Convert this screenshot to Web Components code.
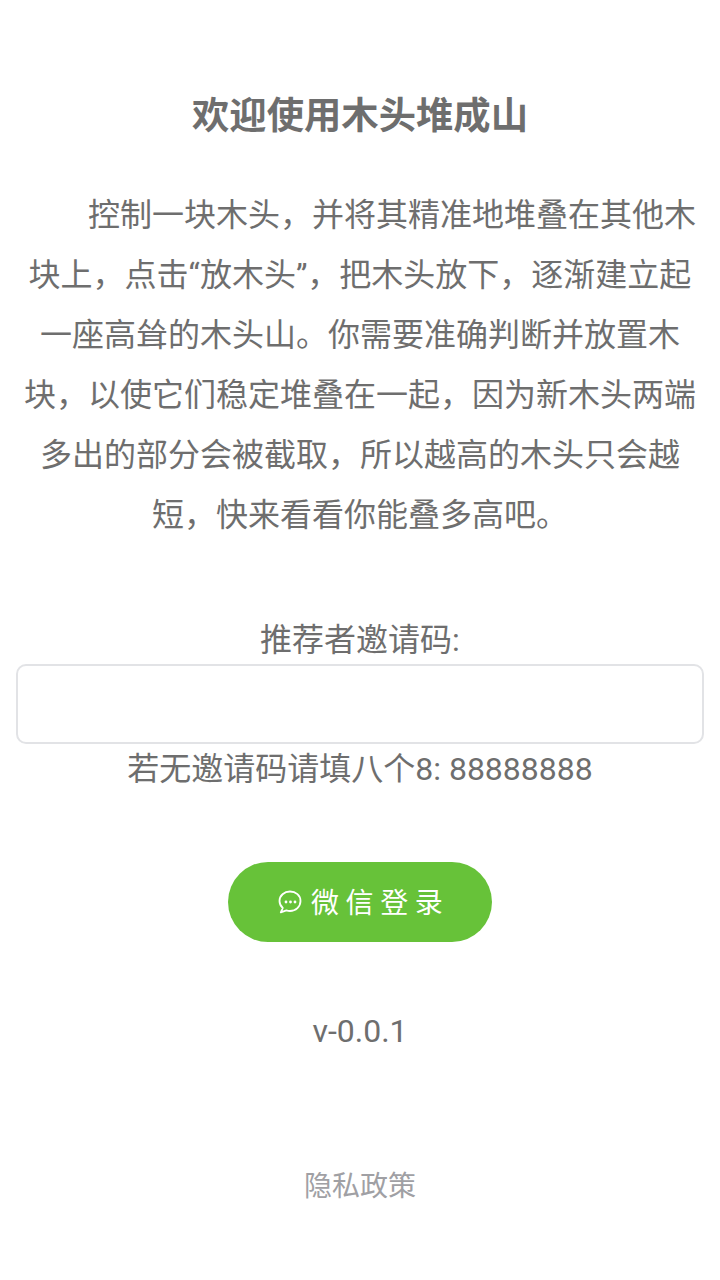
<!DOCTYPE html>
<html lang="zh-CN">
<head>
<meta charset="utf-8">
<title>木头堆成山</title>
<style>
  html, body { margin: 0; padding: 0; background: #fff; }
  body { font-family: Roboto, "Noto Sans CJK SC", sans-serif; color: #6e6e6e; }
</style>
</head>
<body>
<login-page>
  <intro-block title-text="欢迎使用木头堆成山">控制一块木头，并将其精准地堆叠在其他木块上，点击“放木头”，把木头放下，逐渐建立起一座高耸的木头山。你需要准确判断并放置木块，以使它们稳定堆叠在一起，因为新木头两端多出的部分会被截取，所以越高的木头只会越短，快来看看你能叠多高吧。</intro-block>
  <invite-field label="推荐者邀请码:" hint="若无邀请码请填八个8: 88888888"></invite-field>
  <wechat-button>微信登录</wechat-button>
  <page-footer version="v-0.0.1" link="隐私政策"></page-footer>
</login-page>
<script>
class loginPage extends HTMLElement {
    constructor() {
        super();
        this.attachShadow({mode: "open"});
        this.shadowRoot.innerHTML = `
          <style>
            :host {
                display: flex;
                flex-direction: column;
                min-height: 1280px;
                box-sizing: border-box;
                padding: 0 16px;
                font-family: Roboto, "Noto Sans CJK SC", sans-serif;
                color: #6e6e6e;
            }
          </style>
          <slot></slot>
        `;
    }
}
class introBlock extends HTMLElement {
    constructor() {
        super();
        this.attachShadow({mode: "open"});
        this.shadowRoot.innerHTML = `
          <style>
            :host {
                display: block;
                padding-top: 92px;
                text-align: center;
            }
            h1 {
                margin: 0 0 45px;
                font-size: 37.33px;
                line-height: 48px;
                font-weight: 700;
            }
            p {
                margin: 0;
                font-size: 32px;
                line-height: 60px;
                text-indent: 2em;
            }
          </style>
          <h1>${this.getAttribute("title-text")}</h1>
          <p><slot></slot></p>
        `;
    }
}
class inviteField extends HTMLElement {
    constructor() {
        super();
        this.attachShadow({mode: "open"});
        this.shadowRoot.innerHTML = `
          <style>
            :host {
                display: block;
                margin-top: 71px;
                text-align: center;
                font-size: 32px;
            }
            label { display: block; }
            input {
                display: block;
                box-sizing: border-box;
                width: 100%;
                height: 80px;
                margin: 0;
                border: 2px solid #e2e3e6;
                border-radius: 10px;
                background: #fff;
                outline: none;
            }
            .label-line { line-height: 48px; }
            .hint { line-height: 50px; }
          </style>
          <label class="label-line" for="code">${this.getAttribute("label")}</label>
          <input id="code" type="text">
          <div class="hint">${this.getAttribute("hint")}</div>
        `;
    }
}
class wechatButton extends HTMLElement {
    constructor() {
        super();
        this.attachShadow({mode: "open"});
        this.shadowRoot.innerHTML = `
          <style>
            :host {
                display: flex;
                justify-content: center;
                margin-top: 68px;
            }
            button {
                display: flex;
                align-items: center;
                justify-content: flex-start;
                gap: 9px;
                box-sizing: border-box;
                width: 264px;
                height: 80px;
                padding: 0 0 0 50px;
                border: 0;
                border-radius: 40px;
                background: #67c239;
                color: #fff;
                font-family: inherit;
                font-size: 28px;
                letter-spacing: 6.6px;
            }
            svg { width: 24px; height: 24px; display: block; }
            span { margin-top: -2px; }
          </style>
          <button>
            <svg viewBox="0 0 24 24" fill="none" stroke="#fff" stroke-width="1.8" stroke-linejoin="round" stroke-linecap="round">
              <path d="M12 1.500C6.200 1.500 1.500 5.600 1.500 11c0 2.800 1.300 5.200 3.300 7L2.800 22.400l5.600-2c1.100.4 2.300.6 3.600.6 5.800 0 10.500-4.400 10.500-10S17.800 1.500 12 1.500z"/>
              <circle cx="8" cy="12" r="1.400" fill="#fff" stroke="none"/>
              <circle cx="12.500" cy="12" r="1.400" fill="#fff" stroke="none"/>
              <circle cx="17" cy="12" r="1.400" fill="#fff" stroke="none"/>
            </svg>
            <span><slot></slot></span>
          </button>
        `;
    }
}
class pageFooter extends HTMLElement {
    constructor() {
        super();
        this.attachShadow({mode: "open"});
        this.shadowRoot.innerHTML = `
          <style>
            :host {
                display: block;
                text-align: center;
            }
            .version {
                margin-top: 66px;
                font-size: 32px;
                line-height: 46px;
            }
            a {
                display: block;
                margin-top: 111px;
                font-size: 28px;
                line-height: 44px;
                color: #a0a0a4;
                text-decoration: none;
            }
          </style>
          <div class="version">${this.getAttribute("version")}</div>
          <a href="#">${this.getAttribute("link")}</a>
        `;
    }
}
customElements.define("login-page", loginPage);
customElements.define("intro-block", introBlock);
customElements.define("invite-field", inviteField);
customElements.define("wechat-button", wechatButton);
customElements.define("page-footer", pageFooter);
</script>
</body>
</html>
